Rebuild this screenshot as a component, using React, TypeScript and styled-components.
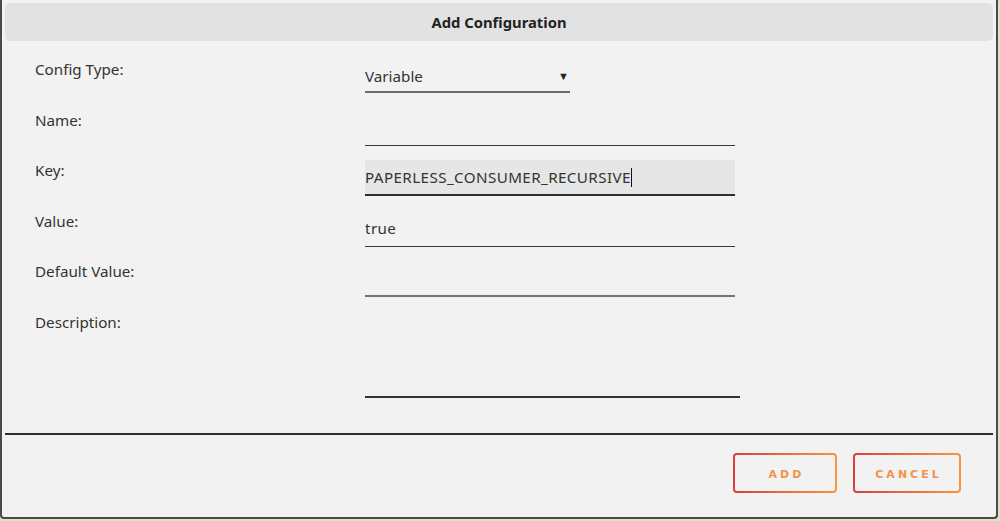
import styled, { createGlobalStyle } from "styled-components";

const GlobalStyle = createGlobalStyle`
  html, body {
    margin: 0;
    padding: 0;
    background: #d9e4c9;
    font-family: "Noto Sans", "Open Sans", sans-serif;
  }
`;

const rows = [
  { label: "Name:", value: "" },
  { label: "Key:", value: "PAPERLESS_CONSUMER_RECURSIVE", focused: true },
  { label: "Value:", value: "true" },
  { label: "Default Value:", value: "", muted: true },
];

const App = () => {
  return (
    <>
      <GlobalStyle />
      <Page>
        <Dialog>
          <Header>Add Configuration</Header>
          <Form>
            <Label>Config Type:</Label>
            <Select>
              <span>Variable</span>
              <Arrow>▼</Arrow>
            </Select>
            {rows.map((r) => (
              <Row key={r.label}>
                <Label>{r.label}</Label>
                <Field focused={r.focused} muted={r.muted}>
                  {r.value}
                  {r.focused && <Caret />}
                </Field>
              </Row>
            ))}
            <Label>Description:</Label>
            <TextArea />
          </Form>
          <Divider />
          <Footer>
            <GradientButton width={104}>ADD</GradientButton>
            <GradientButton width={108}>CANCEL</GradientButton>
          </Footer>
        </Dialog>
      </Page>
    </>
  );
};

export default App;

const Page = styled.div`
  width: 1000px;
  height: 521px;
  overflow: hidden;
`;

const Dialog = styled.div`
  width: 998px;
  height: 519px;
  box-sizing: border-box;
  background: #f2f2f2;
  border: 2px solid #4a4a4a;
  border-top: none;
  border-radius: 0 0 4px 4px;
  padding: 3px 3px 0 3px;
  display: flex;
  flex-direction: column;
`;

const Header = styled.div`
  height: 38px;
  background: #e2e2e2;
  border-radius: 5px;
  display: flex;
  align-items: center;
  justify-content: center;
  font-size: 14.8px;
  font-weight: 700;
  color: #222;
`;

const Form = styled.div`
  display: grid;
  grid-template-columns: 330px 1fr;
  grid-template-rows: repeat(5, 50.6px) auto;
  padding: 17px 0 0 30px;
`;

const Row = styled.div`
  display: contents;
`;

const Label = styled.div`
  font-size: 15.2px;
  line-height: 22px;
  color: #333;
`;

const Select = styled.div`
  width: 205px;
  height: 35px;
  box-sizing: border-box;
  border-bottom: 2px solid #6a6a6a;
  display: flex;
  align-items: center;
  justify-content: space-between;
  font-size: 15.2px;
  color: #333;
  padding-top: 2px;
`;

const Arrow = styled.span`
  font-size: 11px;
  color: #222;
  margin-right: 1px;
`;

const Field = styled.div<{ focused?: boolean; muted?: boolean }>`
  width: 370px;
  height: 36px;
  margin-top: 1px;
  box-sizing: border-box;
  display: flex;
  align-items: center;
  font-size: 15.2px;
  letter-spacing: 0.4px;
  color: #333;
  background: ${(p) => (p.focused ? "#e6e6e6" : "transparent")};
  border-bottom: ${(p) =>
    p.muted ? "2px solid #747474" : p.focused ? "2px solid #2e2e2e" : "1px solid #3a3a3a"};
`;

const Caret = styled.span`
  display: inline-block;
  width: 1px;
  height: 19px;
  background: #111;
`;

const TextArea = styled.div`
  width: 375px;
  height: 87px;
  box-sizing: border-box;
  border-bottom: 2px solid #333;
`;

const Divider = styled.div`
  height: 2px;
  background: #2f2f2f;
  margin-top: 35px;
`;

const Footer = styled.div`
  display: flex;
  justify-content: flex-end;
  gap: 16px;
  padding: 18px 32px 0 0;
`;

const GradientButton = styled.button<{ width: number }>`
  width: ${(p) => p.width}px;
  height: 40px;
  border: 2px solid transparent;
  border-radius: 4px;
  background:
    linear-gradient(#f2f2f2, #f2f2f2) padding-box,
    linear-gradient(to right, #d8403b, #f7963f) border-box;
  color: #f2924a;
  font-family: "DejaVu Sans", "Noto Sans", sans-serif;
  font-size: 11px;
  font-weight: 700;
  letter-spacing: 3px;
  padding: 3px 0 0 3px;
  cursor: pointer;
`;
